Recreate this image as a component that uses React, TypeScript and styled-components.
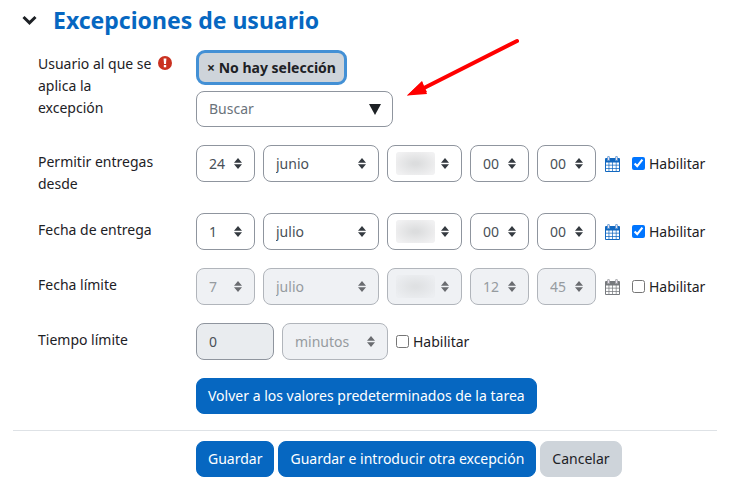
import React, { useId } from 'react';
import styled, { createGlobalStyle, css } from 'styled-components';

const GlobalStyle = createGlobalStyle`
  *, *::before, *::after { box-sizing: border-box; }
  body {
    margin: 0;
    background: #fff;
    color: #1d2125;
    font-family: 'Noto Sans', 'Open Sans', sans-serif;
    font-size: 14px;
    line-height: 22px;
  }
  button, input, select { font: inherit; margin: 0; }
`;

const Page = styled.main`
  position: relative;
  padding: 3px 30px 7px 13px;
`;

const Header = styled.header`
  display: flex;
  align-items: center;
  gap: 15px;
  padding-left: 8px;
  margin-bottom: 13px;
`;

const ToggleButton = styled.button`
  display: flex;
  padding: 0;
  border: 0;
  background: none;
  color: #1d2125;
`;

const Title = styled.h3`
  margin: 0;
  color: #0667c1;
  font-size: 23px;
  line-height: 34px;
  font-weight: 700;
`;

const Fields = styled.div`
  display: flex;
  flex-direction: column;
  gap: 18px;
  padding-left: 25px;
`;

const Row = styled.div`
  display: grid;
  grid-template-columns: 134px minmax(0, 1fr);
  column-gap: 24px;
`;

const LabelCell = styled.div<{ $offset?: number }>`
  display: flex;
  justify-content: space-between;
  align-items: flex-start;
  padding-top: ${(p) => p.$offset ?? 6}px;
`;

const LabelText = styled.label`
  flex: 0 1 118px;
`;

const RequiredIcon = styled.svg`
  flex: none;
  margin-top: 3px;
`;

const Controls = styled.div`
  display: flex;
  flex-wrap: wrap;
  align-items: center;
  align-content: flex-start;
  gap: 8px;
`;

const Stack = styled.div`
  display: flex;
  flex-direction: column;
  align-items: flex-start;
  gap: 6px;
`;

const SelectionBadge = styled.button`
  height: 35px;
  padding: 0 8px;
  border: 3px solid #4390d5;
  border-radius: 9px;
  background: #ced4da;
  color: #1d2125;
  font-weight: 700;
  line-height: 28px;
  white-space: nowrap;
`;

const fieldBox = css`
  height: 37px;
  border: 1px solid #8f959e;
  border-radius: 8px;
  background: #fff;
  color: #495057;
`;

const SearchBox = styled.div`
  ${fieldBox}
  display: flex;
  align-items: center;
  width: 197px;
  height: 36px;
  padding: 0 11px 0 12px;
`;

const SearchInput = styled.input`
  flex: 1;
  min-width: 0;
  padding: 0;
  border: 0;
  outline: 0;
  background: none;
  color: #495057;
  &::placeholder { color: #6a737b; opacity: 1; }
`;

const MenuButton = styled.button`
  display: flex;
  padding: 0;
  border: 0;
  background: none;
  color: #1d2125;
`;

const SelectFrame = styled.span<{ $width: number; $disabled?: boolean }>`
  position: relative;
  display: inline-flex;
  width: ${(p) => p.$width}px;
  color: ${(p) => (p.$disabled ? '#6a6c70' : '#343a40')};
`;

const SelectControl = styled.select`
  ${fieldBox}
  width: 100%;
  padding: 0 20px 0 12px;
  appearance: none;
  &:disabled {
    border-color: #b1b5bb;
    background: #eff1f4;
    color: #969b9f;
    opacity: 1;
  }
`;

const SelectArrows = styled.svg`
  position: absolute;
  right: 13px;
  top: 13px;
  pointer-events: none;
`;

const HiddenValue = styled.span<{ $disabled?: boolean }>`
  position: absolute;
  left: 9px;
  top: 7px;
  width: 39px;
  height: 23px;
  border-radius: 3px;
  background: radial-gradient(ellipse at center,
    ${(p) => (p.$disabled ? '#dfe1e3' : '#dcddde')} 10%,
    ${(p) => (p.$disabled ? '#eceef1' : '#f1f1f2')} 85%);
  pointer-events: none;
`;

const CalendarLink = styled.a<{ $disabled?: boolean }>`
  display: flex;
  margin: 0 4px 0 1px;
  color: ${(p) => (p.$disabled ? '#777a7e' : '#1268c0')};
`;

const CheckLabel = styled.label`
  display: flex;
  align-items: center;
  gap: 4px;
`;

const Checkbox = styled.input`
  width: 13px;
  height: 13px;
  accent-color: #0075ff;
`;

const DurationInput = styled.input`
  ${fieldBox}
  width: 78px;
  padding: 0 12px;
  &:disabled { background: #e9ecef; color: #495057; }
`;

const Button = styled.button<{ $secondary?: boolean }>`
  height: 36px;
  padding: 0 11px;
  border: 1px solid ${(p) => (p.$secondary ? '#ced4da' : '#0667c1')};
  border-radius: 8px;
  background: ${(p) => (p.$secondary ? '#ced4da' : '#0667c1')};
  color: ${(p) => (p.$secondary ? '#1d2125' : '#fff')};
  white-space: nowrap;
`;

const Divider = styled.hr`
  height: 1px;
  margin: 16px 0 10px;
  border: 0;
  background: #dee2e6;
`;

const Actions = styled.div`
  display: flex;
  flex-wrap: wrap;
  gap: 4px;
  padding-left: 183px;
`;

const Pointer = styled.svg`
  position: absolute;
  left: 400px;
  top: 32px;
  pointer-events: none;
`;

function Picker({ value, width, disabled, label, id }: {
  value: string; width: number; disabled?: boolean; label: string; id?: string;
}) {
  return (
    <SelectFrame $width={width} $disabled={disabled}>
      <SelectControl id={id} aria-label={id ? undefined : label} disabled={disabled} defaultValue={value}>
        <option value={value}>{value}</option>
      </SelectControl>
      {value === '' && <HiddenValue $disabled={disabled} />}
      <SelectArrows width="8" height="11" viewBox="0 0 8 11" aria-hidden="true">
        <path d="M0 4.700 4 0l4 4.700zM0 6.300h8L4 11z" fill="currentColor" />
      </SelectArrows>
    </SelectFrame>
  );
}

function CalendarIcon() {
  return (
    <svg width="15" height="16" viewBox="0 0 15 16" aria-hidden="true">
      <path d="M0 3a1 1 0 0 1 1-1h13a1 1 0 0 1 1 1v12a1 1 0 0 1-1 1H1a1 1 0 0 1-1-1z" fill="currentColor" />
      <path
        d="M1 6.500h2.600v2.200H1zM4.300 6.500h2.900v2.200H4.300zM7.900 6.500h2.900v2.200H7.900zM11.500 6.500H14v2.200h-2.500zM1 9.400h2.600V12H1zM4.300 9.400h2.900V12H4.300zM7.900 9.400h2.900V12H7.900zM11.500 9.400H14V12h-2.500zM1 12.700h2.600V15H1zM4.300 12.700h2.900V15H4.300zM7.900 12.700h2.900V15H7.900zM11.500 12.700H14V15h-2.500z"
        fill="#fff"
      />
      <path d="M3.500 1.500v2M11.500 1.500v2" stroke="#fff" strokeWidth="3" strokeLinecap="round" opacity="0.6" />
      <path d="M3.500 1.500v2M11.500 1.500v2" stroke="currentColor" strokeOpacity="0.6" strokeWidth="2.800" strokeLinecap="round" />
      <path d="M3.500 1.500v2M11.500 1.500v2" stroke="#e8dfee" strokeWidth="1.200" strokeLinecap="round" />
    </svg>
  );
}

function Enable({ checked }: { checked?: boolean }) {
  return (
    <CheckLabel>
      <Checkbox type="checkbox" defaultChecked={checked} />
      Habilitar
    </CheckLabel>
  );
}

function DateRow({ label, day, month, hour, minute, enabled }: {
  label: string; day: string; month: string; hour: string; minute: string; enabled?: boolean;
}) {
  const id = useId();
  const disabled = !enabled;
  return (
    <Row>
      <LabelCell>
        <LabelText htmlFor={id}>{label}</LabelText>
      </LabelCell>
      <Controls>
        <Picker id={id} label="Día" value={day} width={59} disabled={disabled} />
        <Picker label="Mes" value={month} width={116} disabled={disabled} />
        <Picker label="Año" value="" width={75} disabled={disabled} />
        <Picker label="Hora" value={hour} width={59} disabled={disabled} />
        <Picker label="Minuto" value={minute} width={59} disabled={disabled} />
        <CalendarLink href="#" aria-label="Calendario" $disabled={disabled}>
          <CalendarIcon />
        </CalendarLink>
        <Enable checked={enabled} />
      </Controls>
    </Row>
  );
}

export default function App() {
  return (
    <>
      <GlobalStyle />
      <Page>
        <Header>
          <ToggleButton type="button" aria-label="Contraer">
            <svg width="17" height="12" viewBox="0 0 17 12" aria-hidden="true">
              <path d="m2.500 3 6 5.800 6-5.800" fill="none" stroke="currentColor" strokeWidth="3" />
            </svg>
          </ToggleButton>
          <Title>Excepciones de usuario</Title>
        </Header>
        <Fields>
          <Row>
            <LabelCell $offset={3}>
              <LabelText htmlFor="usuario">Usuario al que se aplica la excepción</LabelText>
              <RequiredIcon width="14" height="14" viewBox="0 0 14 14" role="img" aria-label="Obligatorio">
                <circle cx="7" cy="7" r="7" fill="#ca3120" />
                <path d="M5.600 2.400h2.800L8 8H6z" fill="#fff" />
                <rect x="5.800" y="9" width="2.400" height="2.300" fill="#fff" />
              </RequiredIcon>
            </LabelCell>
            <Stack>
              <SelectionBadge type="button">× No hay selección</SelectionBadge>
              <SearchBox>
                <SearchInput id="usuario" type="text" placeholder="Buscar" />
                <MenuButton type="button" aria-label="Mostrar usuarios">
                  <svg width="12" height="12" viewBox="0 0 12 12" aria-hidden="true">
                    <path d="M0 1h12L6 12z" fill="currentColor" />
                  </svg>
                </MenuButton>
              </SearchBox>
            </Stack>
          </Row>
          <DateRow label="Permitir entregas desde" day="24" month="junio" hour="00" minute="00" enabled />
          <DateRow label="Fecha de entrega" day="1" month="julio" hour="00" minute="00" enabled />
          <DateRow label="Fecha límite" day="7" month="julio" hour="12" minute="45" />
          <Row>
            <LabelCell>
              <LabelText htmlFor="tiempo">Tiempo límite</LabelText>
            </LabelCell>
            <Controls>
              <DurationInput id="tiempo" type="text" defaultValue="0" disabled />
              <Picker label="Unidad de tiempo" value="minutos" width={106} disabled />
              <Enable />
            </Controls>
          </Row>
          <Row>
            <span />
            <div>
              <Button type="button">Volver a los valores predeterminados de la tarea</Button>
            </div>
          </Row>
        </Fields>
        <Divider />
        <Actions>
          <Button type="submit">Guardar</Button>
          <Button type="submit">Guardar e introducir otra excepción</Button>
          <Button type="button" $secondary>Cancelar</Button>
        </Actions>
        <Pointer width="124" height="70" viewBox="0 0 124 70" aria-hidden="true">
          <path d="M117 9 24 56" stroke="#f00" strokeWidth="4" strokeLinecap="round" />
          <path d="M7 63.500 22 49l5 13z" fill="#f00" transform="translate(0 0)" />
          <path d="M7 63.500 22 49.500l2 5 3 5.500z" fill="#f00" />
        </Pointer>
      </Page>
    </>
  );
}
